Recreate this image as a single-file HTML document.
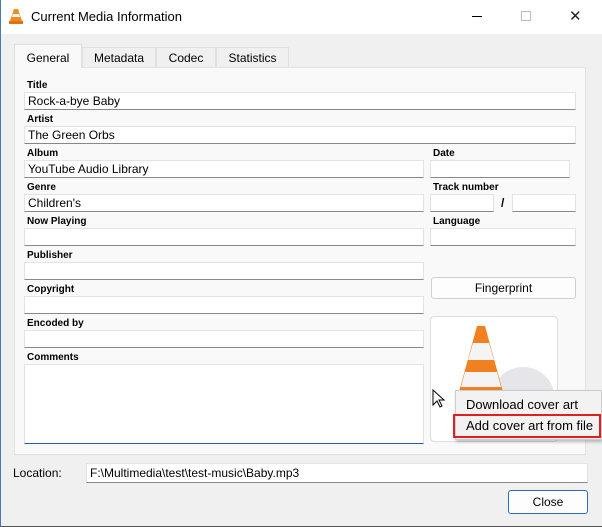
<!DOCTYPE html>
<html><head><meta charset="utf-8"><style>
*{box-sizing:border-box;margin:0;padding:0}
body{width:602px;height:527px;background:#fff;font-family:"Liberation Sans",sans-serif;position:relative;overflow:hidden}
.win{position:absolute;left:0;top:0;width:602px;height:527px;background:#f0f0f0}
.title{position:absolute;left:0;top:0;width:602px;height:34px;background:#fff}
.a{position:absolute}
.lbl{position:absolute;font-size:10px;font-weight:bold;color:#000}
.in{position:absolute;background:#fff;border:1px solid #e3e3e3;border-bottom:1px solid #888;font-size:12px;padding:1px 0 0 3px;height:18px;line-height:15px}
.tab{position:absolute;top:47px;height:20px;font-size:12px;text-align:center;line-height:20px;background:#f0f0f0;border:1px solid #e0e0e0;border-bottom:none}
</style></head><body>
<div class="win">
<div class="title">
<svg class="a" style="left:9px;top:8px" width="14" height="16" viewBox="0 0 14 16"><path d="M5 1h4l4 12H1z" fill="#f08a1d"/><path d="M4 6h6l1 3H3z" fill="#fff"/><rect x="0" y="13" width="14" height="3" fill="#e07010"/></svg>
<div class="a" style="left:31px;top:9px;font-size:13px">Current Media Information</div>
<div class="a" style="left:472px;top:16px;width:10px;height:1px;background:#000"></div>
<div class="a" style="left:521px;top:11px;width:10px;height:10px;border:1px solid #bbb"></div>
<div class="a" style="left:569px;top:7px;font-size:15px;color:#222">✕</div>
</div>
<div class="a" style="left:14px;top:67px;width:572px;height:388px;background:#f9f9f9;border:1px solid #e2e2e2"></div>
<div class="tab" style="left:14px;top:44px;width:68px;height:24px;background:#f9f9f9;line-height:26px">General</div>
<div class="tab" style="left:82px;width:74px">Metadata</div>
<div class="tab" style="left:156px;width:60px">Codec</div>
<div class="tab" style="left:216px;width:73px">Statistics</div>

<div class="lbl" style="left:27px;top:80px">Title</div>
<div class="in" style="left:24px;top:92px;width:552px">Rock-a-bye Baby</div>
<div class="lbl" style="left:27px;top:114px">Artist</div>
<div class="in" style="left:24px;top:126px;width:552px">The Green Orbs</div>
<div class="lbl" style="left:27px;top:148px">Album</div>
<div class="in" style="left:24px;top:160px;width:400px">YouTube Audio Library</div>
<div class="lbl" style="left:433px;top:148px">Date</div>
<div class="in" style="left:430px;top:160px;width:140px"></div>
<div class="lbl" style="left:27px;top:182px">Genre</div>
<div class="in" style="left:24px;top:194px;width:400px">Children's</div>
<div class="lbl" style="left:433px;top:182px">Track number</div>
<div class="in" style="left:430px;top:194px;width:64px"></div>
<div class="a" style="left:501px;top:196px;font-size:12px;font-weight:bold">/</div>
<div class="in" style="left:512px;top:194px;width:64px"></div>
<div class="lbl" style="left:27px;top:216px">Now Playing</div>
<div class="in" style="left:24px;top:228px;width:400px"></div>
<div class="lbl" style="left:433px;top:216px">Language</div>
<div class="in" style="left:430px;top:228px;width:146px"></div>
<div class="lbl" style="left:27px;top:250px">Publisher</div>
<div class="in" style="left:24px;top:262px;width:400px"></div>
<div class="lbl" style="left:27px;top:284px">Copyright</div>
<div class="in" style="left:24px;top:296px;width:400px"></div>
<div class="a" style="left:431px;top:277px;width:145px;height:22px;background:#fdfdfd;border:1px solid #d0d0d0;border-radius:3px;font-size:12px;text-align:center;line-height:21px">Fingerprint</div>
<div class="lbl" style="left:27px;top:318px">Encoded by</div>
<div class="in" style="left:24px;top:330px;width:400px"></div>
<div class="lbl" style="left:27px;top:352px">Comments</div>
<div class="in" style="left:24px;top:364px;width:400px;height:80px;border-bottom:1px solid #2060b0"></div>

<div class="a" style="left:430px;top:316px;width:128px;height:126px;background:#fff;border:1px solid #ddd;border-radius:4px;overflow:hidden">
<svg width="128" height="126"><circle cx="92" cy="82" r="32" fill="#e6e6ea"/><circle cx="92" cy="82" r="8" fill="#d2d2d8"/><path d="M46 9h8l18 66H28z" fill="#f08020"/><path d="M42 26h16l5 17H37z" fill="#f4f4f4"/><path d="M34 55h32l4 15H30z" fill="#f4f4f4"/></svg>
</div>
<svg class="a" style="left:432px;top:389px" width="14" height="20" viewBox="0 0 14 20"><path d="M1 1v15l4-4 3 6 2-1-3-6h5z" fill="#fff" stroke="#000"/></svg>
<div class="a" style="left:455px;top:390px;width:147px;height:50px;background:#f2f2f2;border:1px solid #ccc;box-shadow:1px 2px 3px rgba(0,0,0,.25)"></div>
<div class="a" style="left:466px;top:397px;font-size:13px">Download cover art</div>
<div class="a" style="left:453px;top:414px;width:148px;height:24px;border:2px solid #e02020"></div>
<div class="a" style="left:466px;top:418px;font-size:13px">Add cover art from file</div>

<div class="a" style="left:13px;top:466px;font-size:12px">Location:</div>
<div class="in" style="left:86px;top:463px;width:502px;height:20px;padding-top:2px">F:\Multimedia\test\test-music\Baby.mp3</div>
<div class="a" style="left:508px;top:490px;width:80px;height:24px;background:#fdfdfd;border:1px solid #2a6cc0;border-radius:3px;font-size:12px;text-align:center;line-height:22px">Close</div>
<div class="a" style="left:0;top:0;width:1px;height:527px;background:#4a78b0"></div>
<div class="a" style="left:0;top:526px;width:602px;height:1px;background:#555"></div>
</div>
</body></html>
